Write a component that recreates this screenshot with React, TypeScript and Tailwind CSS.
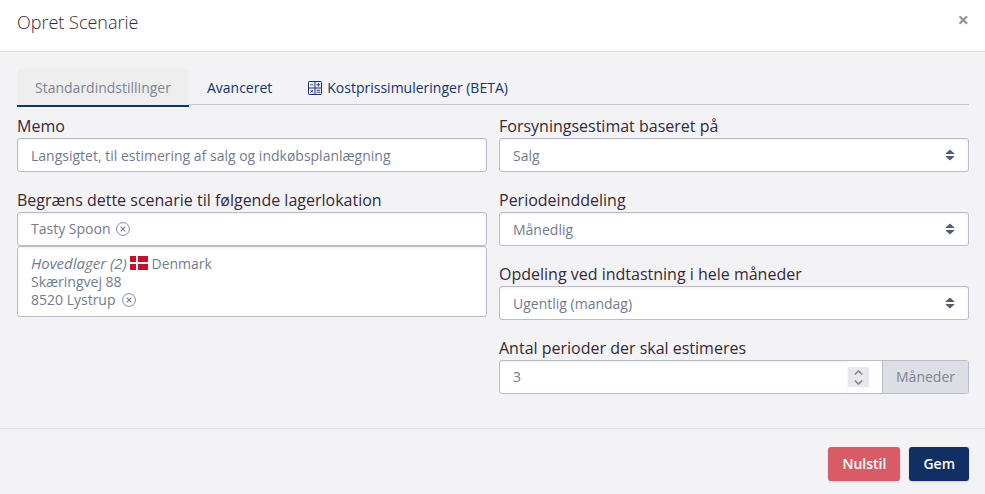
import { useState } from "react";
import type { ReactNode } from "react";

const field =
  "w-full rounded-[3px] border border-[#b9bdc9] bg-white px-[13px] text-sm text-[#737b8e] shadow-[inset_0_1px_2px_rgba(60,70,90,0.08)] outline-none focus:border-[#11305f]";

function CalculatorIcon() {
  return (
    <svg viewBox="0 0 14 14" className="size-[14px] shrink-0" fill="none" stroke="currentColor" aria-hidden="true">
      <rect x="0.5" y="0.5" width="13" height="13" rx="0.8" />
      <path d="M7 0.5v13M0.5 7h13" />
      <path d="M2.2 3.8h3.2M8.6 3.8h3.6M10.4 2v3.6M8.6 9.3h3.6M8.6 11.3h3.6M2.5 9l2.5 2.5M5 9l-2.5 2.5" strokeWidth="0.9" />
    </svg>
  );
}

function RemoveButton({ label }: { label: string }) {
  return (
    <button type="button" aria-label={label} className="ml-[6px] inline-flex align-[-2px]">
      <svg viewBox="0 0 14 14" className="size-[14px]" fill="none" stroke="currentColor" aria-hidden="true">
        <circle cx="7" cy="7" r="6.4" strokeWidth="0.9" />
        <path d="M4.7 4.7l4.6 4.6M9.3 4.7l-4.6 4.6" strokeWidth="1.1" />
      </svg>
    </button>
  );
}

function DanishFlag() {
  return (
    <svg viewBox="0 0 18 14" className="ml-[3px] inline-block h-[14px] w-[18px] align-[-1px]" role="img" aria-label="Dannebrog">
      <rect width="18" height="14" fill="#c8102e" />
      <path d="M6.9 0v14M0 7h18" stroke="#fff" strokeWidth="1.8" />
    </svg>
  );
}

function Field({ id, label, children }: { id: string; label: string; children: ReactNode }) {
  return (
    <div className="mb-4">
      <label htmlFor={id} className="block text-base leading-6">
        {label}
      </label>
      {children}
    </div>
  );
}

function SelectField({ id, label, options }: { id: string; label: string; options: string[] }) {
  return (
    <Field id={id} label={label}>
      <div className="grid items-center">
        <select id={id} className={`${field} col-start-1 row-start-1 h-[34px] appearance-none pt-px`}>
          {options.map((o) => (
            <option key={o}>{o}</option>
          ))}
        </select>
        <svg
          viewBox="0 0 10 12"
          className="pointer-events-none col-start-1 row-start-1 mr-[14px] h-3 w-[10px] justify-self-end"
          fill="#545c70"
          aria-hidden="true"
        >
          <path d="M5 0.4L9.4 4.6Q9.5 5 9 5H1Q0.5 5 0.6 4.6zM5 11.6L0.6 7.4Q0.5 7 1 7H9Q9.5 7 9.4 7.4z" />
        </svg>
      </div>
    </Field>
  );
}

export default function App() {
  const [memo, setMemo] = useState("Langsigtet, til estimering af salg og indkøbsplanlægning");
  const [periods, setPeriods] = useState(3);

  return (
    <div className="min-h-screen bg-[#f3f3f6] font-['Open_Sans','Noto_Sans',sans-serif] text-[#352a35]">
      <header className="flex h-[52px] items-start justify-between border-b border-[#dcdce0] bg-white pt-[10px] pr-4 pl-[17px]">
        <h1 className="text-lg leading-6 font-light">Opret Scenarie</h1>
        <button type="button" aria-label="Luk" className="text-xl leading-5 font-bold text-[#969098]">
          ×
        </button>
      </header>

      <form onSubmit={(e) => e.preventDefault()}>
        <div className="pt-[17px] pr-4 pb-[18px] pl-[17px]">
          <div role="tablist" className="flex h-9 border-b border-[#c4c6d0] text-sm text-[#12346b]">
            <button
              type="button"
              role="tab"
              aria-selected="true"
              className="h-[38px] rounded-t-[3px] border-b-2 border-[#12346b] bg-[#eeeeee] px-[18px] pt-[2px] text-[#7c8496]"
            >
              Standardindstillinger
            </button>
            <button type="button" role="tab" aria-selected="false" className="h-[38px] px-[18px]">
              Avanceret
            </button>
            <button type="button" role="tab" aria-selected="false" className="flex h-[38px] items-center gap-[5px] px-[18px]">
              <CalculatorIcon />
              Kostprissimuleringer (BETA)
            </button>
          </div>

          <div className="grid grid-cols-2 gap-3 pt-[9px]">
            <div>
              <Field id="memo" label="Memo">
                <input id="memo" type="text" value={memo} onChange={(e) => setMemo(e.target.value)} className={`${field} block h-[34px]`} />
              </Field>
              <div role="group" aria-labelledby="locations">
                <h2 id="locations" className="text-base leading-6">
                  Begræns dette scenarie til følgende lagerlokation
                </h2>
                <div className={`${field} flex h-[34px] items-center`}>
                  <span>
                    Tasty Spoon
                    <RemoveButton label="Fjern Tasty Spoon" />
                  </span>
                </div>
                <address className={`${field} py-[7px] leading-[18px] not-italic`}>
                  <em className="text-[15px]">Hovedlager (2)</em>
                  <DanishFlag /> Denmark
                  <br />
                  Skæringvej 88
                  <br />
                  8520 Lystrup
                  <RemoveButton label="Fjern Hovedlager" />
                </address>
              </div>
            </div>

            <div>
              <SelectField id="basis" label="Forsyningsestimat baseret på" options={["Salg"]} />
              <SelectField id="interval" label="Periodeinddeling" options={["Månedlig"]} />
              <SelectField id="split" label="Opdeling ved indtastning i hele måneder" options={["Ugentlig (mandag)"]} />
              <Field id="periods" label="Antal perioder der skal estimeres">
                <div className="flex h-[34px] overflow-hidden rounded-[3px] border border-[#b9bdc9] bg-white text-sm text-[#737b8e]">
                  <input
                    id="periods"
                    type="text"
                    inputMode="numeric"
                    value={periods}
                    onChange={(e) => setPeriods(Number(e.target.value) || 0)}
                    className="min-w-0 flex-1 px-[13px] shadow-[inset_0_1px_2px_rgba(60,70,90,0.08)] outline-none"
                  />
                  <div className="my-[6px] mr-[13px] flex w-[21px] flex-col bg-[#e8e8ed] text-[#85838f]">
                    <button type="button" aria-label="Flere perioder" onClick={() => setPeriods(periods + 1)} className="flex flex-1 items-center justify-center">
                      <svg viewBox="0 0 9 5" className="h-[5px] w-[9px]" fill="none" stroke="currentColor" strokeWidth="1.5" aria-hidden="true">
                        <path d="M0.8 4.5l3.7-3.6 3.7 3.6" />
                      </svg>
                    </button>
                    <button type="button" aria-label="Færre perioder" onClick={() => setPeriods(periods - 1)} className="flex flex-1 items-center justify-center">
                      <svg viewBox="0 0 9 5" className="h-[5px] w-[9px]" fill="none" stroke="currentColor" strokeWidth="1.5" aria-hidden="true">
                        <path d="M0.8 0.5l3.7 3.6 3.7-3.6" />
                      </svg>
                    </button>
                  </div>
                  <span className="flex items-center border-l border-[#b9bdc9] bg-[#dddfe4] px-[13px] text-[#7d8496]">Måneder</span>
                </div>
              </Field>
            </div>
          </div>
        </div>

        <footer className="flex justify-end gap-[9px] border-t border-[#e4e4e9] pt-[18px] pr-4 pb-[13px] text-sm font-semibold text-white">
          <button type="reset" className="h-[34px] rounded-[3px] bg-[#d85b66] px-[14px] shadow-[0_1px_2px_rgba(0,0,0,0.15)]">
            Nulstil
          </button>
          <button type="submit" className="h-[34px] rounded-[3px] bg-[#112f62] px-[14px] shadow-[0_1px_2px_rgba(0,0,0,0.15)]">
            Gem
          </button>
        </footer>
      </form>
    </div>
  );
}
